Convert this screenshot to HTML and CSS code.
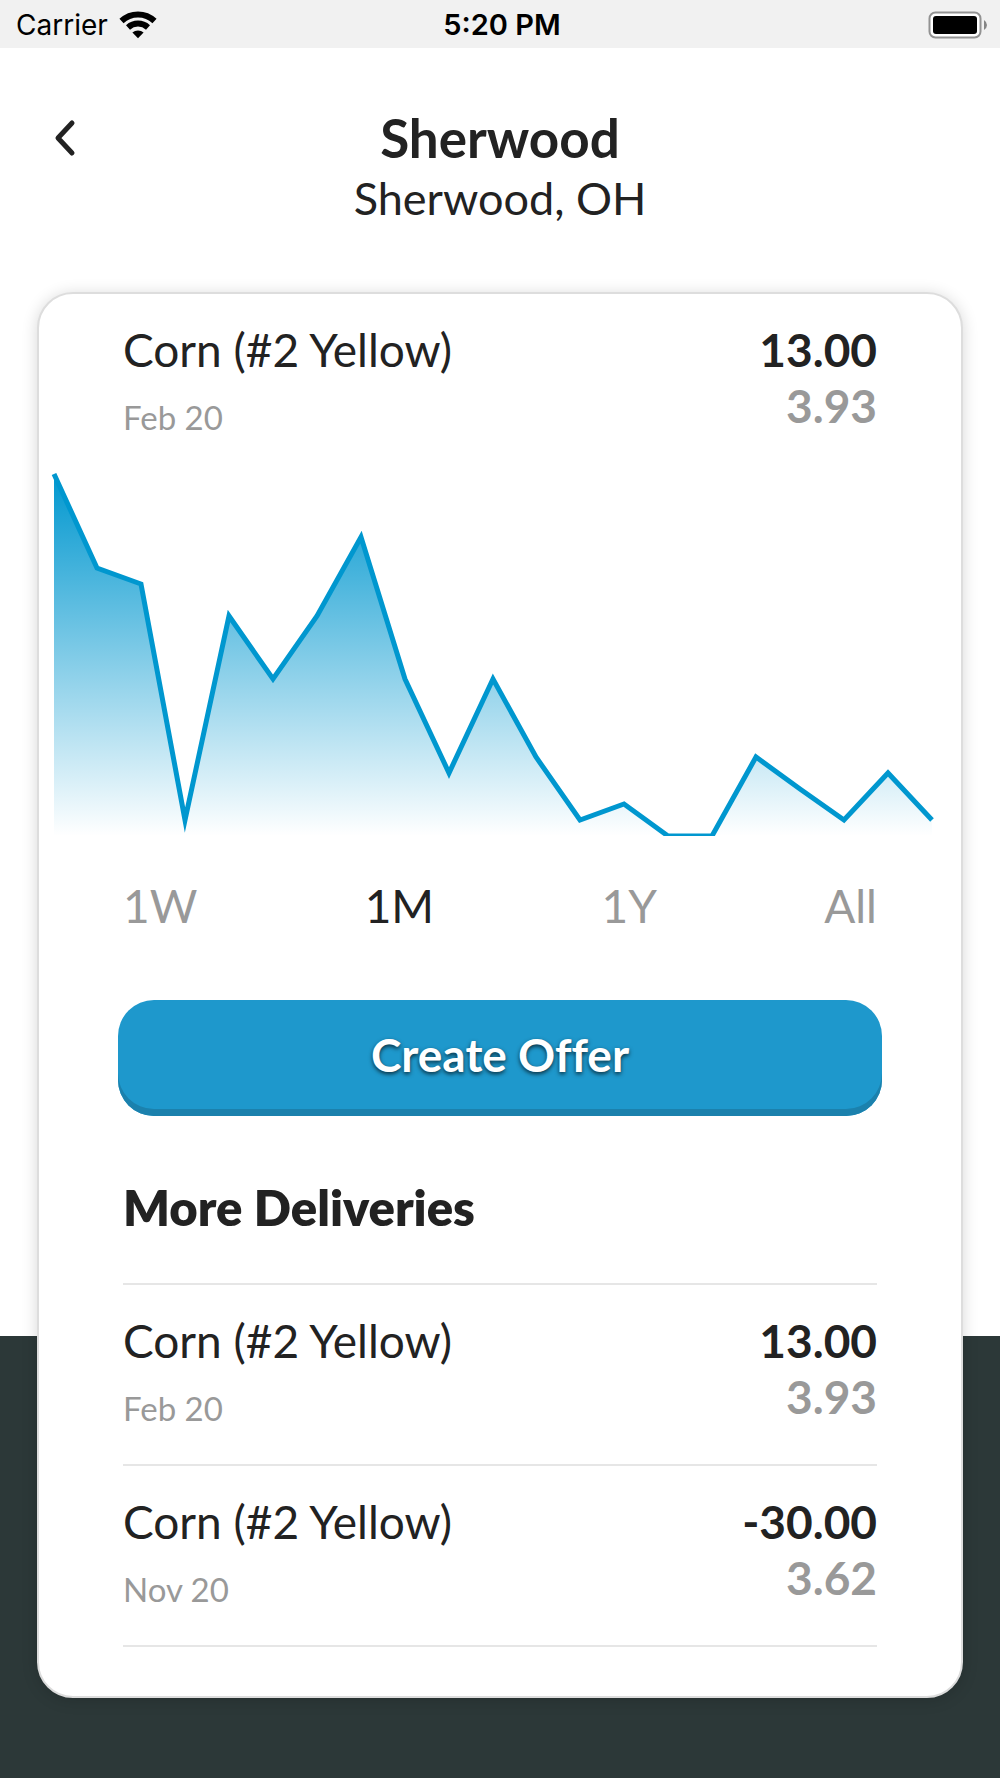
FILE: index.html
```html
<!DOCTYPE html>
<html lang="en">
<head>
  <meta charset="UTF-8">
  <meta name="viewport" content="width=device-width, initial-scale=1">
  <title>Sherwood</title>
  <link rel="stylesheet" href="styles.css">
</head>
<body>
  <div class="status-bar">
    <div class="carrier">
      <span>Carrier</span>
      <svg width="38" height="28" viewBox="0 0 38 28" aria-hidden="true">
        <g fill="none" stroke="#000" stroke-width="6">
          <path d="M2.5 10 A24 24 0 0 1 35.5 10"/>
          <path d="M9 16.4 A15 15 0 0 1 29 16.4"/>
        </g>
        <path d="M13.4 21.6 A8.5 8.5 0 0 1 24.6 21.6 L19 27.3 Z"/>
      </svg>
    </div>
    <div class="clock">5:20 PM</div>
    <svg class="battery" width="60" height="28" viewBox="0 0 60 28" aria-hidden="true">
      <rect x="1.5" y="1.5" width="51" height="25" rx="6" fill="#fff" stroke="#929292" stroke-width="2"/>
      <rect x="5" y="5" width="44" height="18" rx="3"/>
      <path d="M56 9 Q59 11 59 14 Q59 17 56 19 Z" fill="#858585"/>
    </svg>
  </div>

  <header class="header">
    <button class="back" type="button" aria-label="Back">
      <svg width="24" height="40" viewBox="0 0 24 40" aria-hidden="true">
        <path d="M19 5 L5 20 L19 35" fill="none" stroke="#222" stroke-width="5" stroke-linecap="round" stroke-linejoin="round"/>
      </svg>
    </button>
    <div class="title">
      <h1>Sherwood</h1>
      <p>Sherwood, OH</p>
    </div>
  </header>

  <main class="card">
    <div class="quote inset">
      <div>
        <div class="name">Corn (#2 Yellow)</div>
        <div class="date">Feb 20</div>
      </div>
      <div class="prices">
        <div>13.00</div>
        <div class="muted">3.93</div>
      </div>
    </div>

    <svg class="chart" viewBox="0 0 922 363" role="img" aria-label="Price history, one month">
      <defs>
        <linearGradient id="area" x1="0" y1="0" x2="0" y2="1">
          <stop offset="0" stop-color="#0097cf"/>
          <stop offset="1" stop-color="#0097cf" stop-opacity="0"/>
        </linearGradient>
      </defs>
      <path fill="url(#area)" d="M15 1 L58 95 L102 111 L146 347 L190 143 L234 206 L278 143 L322 64 L366 206 L410 300 L454 206 L497 284 L541 347 L585 331 L629 363 L673 363 L717 284 L761 316 L805 347 L849 300 L893 347 V363 H15 Z"/>
      <polyline fill="none" stroke="#0097cf" stroke-width="5" stroke-miterlimit="10" points="15,1 58,95 102,111 146,347 190,143 234,206 278,143 322,64 366,206 410,300 454,206 497,284 541,347 585,331 629,363 673,363 717,284 761,316 805,347 849,300 893,347"/>
    </svg>

    <div class="ranges inset">
      <button type="button">1W</button>
      <button type="button" class="active">1M</button>
      <button type="button">1Y</button>
      <button type="button">All</button>
    </div>

    <button class="offer" type="button">Create Offer</button>

    <section class="inset">
      <h2>More Deliveries</h2>
      <ul class="deliveries">
        <li class="quote">
          <div>
            <div class="name">Corn (#2 Yellow)</div>
            <div class="date">Feb 20</div>
          </div>
          <div class="prices">
            <div>13.00</div>
            <div class="muted">3.93</div>
          </div>
        </li>
        <li class="quote">
          <div>
            <div class="name">Corn (#2 Yellow)</div>
            <div class="date">Nov 20</div>
          </div>
          <div class="prices">
            <div>-30.00</div>
            <div class="muted">3.62</div>
          </div>
        </li>
      </ul>
    </section>
  </main>
</body>
</html>
```

FILE: styles.css
```css
:root {
  --text: #222;
  --muted: #999;
  --line: #e6e6e6;
  --blue: #1e98cc;
  --blue-dark: #1b81ad;
  --dark-bg: #2c3838;
}

* {
  box-sizing: border-box;
}

body {
  margin: 0;
  min-height: 100vh;
  padding-bottom: 80px;
  font-family: Lato, sans-serif;
  font-size: 46px;
  line-height: 56px;
  color: var(--text);
  background: linear-gradient(to top, var(--dark-bg) 442px, #fff 442px);
}

h1, h2, p, ul {
  margin: 0;
  padding: 0;
}

button {
  padding: 0;
  border: none;
  background: none;
  font: inherit;
  color: inherit;
  cursor: pointer;
}

svg {
  display: block;
}

/* status bar */
.status-bar {
  display: grid;
  grid-template-columns: 1fr auto 1fr;
  align-items: center;
  height: 48px;
  padding: 0 12px 0 16px;
  background-color: #f1f1f1;
  font-family: Inter, sans-serif;
  font-size: 28px;
  line-height: 50px;
  color: #000;
}

.carrier {
  display: flex;
  align-items: center;
  gap: 11px;
}

.clock {
  font-size: 29px;
  font-weight: 600;
}

.battery {
  justify-self: end;
}

/* header */
.header {
  display: grid;
  grid-template-columns: 1fr auto 1fr;
  align-items: start;
  padding: 57px 53px 66px;
}

.back {
  justify-self: start;
  padding: 13px 0;
}

.title {
  text-align: center;
}

.title p {
  font-size: 45px;
}

h1 {
  font-size: 53px;
  line-height: 65px;
  font-weight: 700;
}

/* card */
.card {
  margin: 0 37px;
  padding-bottom: 49px;
  background-color: #fff;
  border: 2px solid #ddd;
  border-radius: 36px;
  box-shadow: 0 2px 16px rgba(0, 0, 0, 0.16);
}

.inset {
  margin: 0 84px;
}

.quote {
  display: flex;
  justify-content: space-between;
  padding: 28px 0 36px;
}

.date {
  margin-top: 19px;
  font-size: 33px;
  line-height: 40px;
  color: var(--muted);
}

.prices {
  font-weight: 700;
  text-align: right;
}

.muted {
  color: var(--muted);
}

.chart {
  width: 100%;
  height: auto;
}

.ranges {
  display: flex;
  justify-content: space-between;
  padding: 42px 0 66px;
  font-weight: 400;
  color: var(--muted);
}

.ranges .active {
  color: var(--text);
}

.offer {
  display: block;
  width: calc(100% - 158px);
  height: 116px;
  margin: 0 auto 62px;
  padding-bottom: 7px;
  border-radius: 36px;
  background-color: var(--blue);
  box-shadow: inset 0 -7px 0 var(--blue-dark);
  font-weight: 700;
  font-variant-ligatures: none;
  color: #fff;
  text-shadow: 0 2px 4px rgba(0, 0, 0, 0.7);
}

h2 {
  margin-bottom: 47px;
  font-size: 49px;
  line-height: 58px;
  font-weight: 800;
}

.deliveries {
  list-style: none;
  border-top: 2px solid var(--line);
}

.deliveries .quote {
  border-bottom: 2px solid var(--line);
}
```
